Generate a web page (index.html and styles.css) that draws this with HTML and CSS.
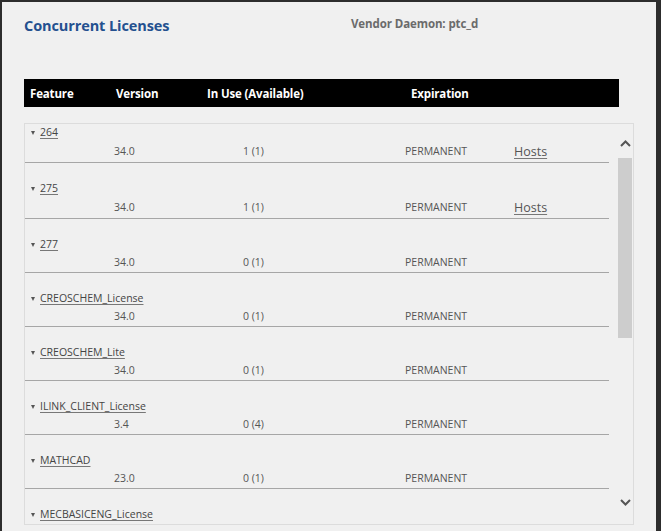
FILE: index.html
```html
<!DOCTYPE html>
<html lang="en">
<head>
<meta charset="utf-8">
<title>Concurrent Licenses</title>
<link rel="stylesheet" href="styles.css">
</head>
<body>
<div class="frame">
  <header class="top">
    <h1 class="title">Concurrent Licenses</h1>
    <div class="vendor">Vendor Daemon: ptc_d</div>
  </header>

  <div class="thead">
    <span class="th th-feature">Feature</span>
    <span class="th th-version">Version</span>
    <span class="th th-inuse">In Use (Available)</span>
    <span class="th th-exp">Expiration</span>
  </div>

  <div class="panel">
    <div class="viewport">
      <ul class="list">
        <li class="row">
          <div class="name"><span class="caret"></span><a href="#">264</a></div>
          <div class="vals has-hosts"><span class="v">34.0</span><span class="u">1 (1)</span><span class="e">PERMANENT</span><a class="hosts" href="#">Hosts</a></div>
        </li>
        <li class="row">
          <div class="name"><span class="caret"></span><a href="#">275</a></div>
          <div class="vals has-hosts"><span class="v">34.0</span><span class="u">1 (1)</span><span class="e">PERMANENT</span><a class="hosts" href="#">Hosts</a></div>
        </li>
        <li class="row">
          <div class="name"><span class="caret"></span><a href="#">277</a></div>
          <div class="vals"><span class="v">34.0</span><span class="u">0 (1)</span><span class="e">PERMANENT</span></div>
        </li>
        <li class="row">
          <div class="name"><span class="caret"></span><a href="#">CREOSCHEM_License</a></div>
          <div class="vals"><span class="v">34.0</span><span class="u">0 (1)</span><span class="e">PERMANENT</span></div>
        </li>
        <li class="row">
          <div class="name"><span class="caret"></span><a href="#">CREOSCHEM_Lite</a></div>
          <div class="vals"><span class="v">34.0</span><span class="u">0 (1)</span><span class="e">PERMANENT</span></div>
        </li>
        <li class="row">
          <div class="name"><span class="caret"></span><a href="#">ILINK_CLIENT_License</a></div>
          <div class="vals"><span class="v">3.4</span><span class="u">0 (4)</span><span class="e">PERMANENT</span></div>
        </li>
        <li class="row">
          <div class="name"><span class="caret"></span><a href="#">MATHCAD</a></div>
          <div class="vals"><span class="v">23.0</span><span class="u">0 (1)</span><span class="e">PERMANENT</span></div>
        </li>
        <li class="row">
          <div class="name"><span class="caret"></span><a href="#">MECBASICENG_License</a></div>
        </li>
      </ul>
    </div>
    <div class="scrollbar">
      <div class="sb-btn sb-up">
        <svg width="11" height="7" viewBox="0 0 11 7"><path d="M1 6 L5.5 1.5 L10 6" fill="none" stroke="#555" stroke-width="2"/></svg>
      </div>
      <div class="sb-thumb"></div>
      <div class="sb-fill"></div>
      <div class="sb-btn sb-down">
        <svg width="11" height="7" viewBox="0 0 11 7"><path d="M1 1 L5.5 5.5 L10 1" fill="none" stroke="#555" stroke-width="2"/></svg>
      </div>
    </div>
  </div>
</div>
</body>
</html>
```

FILE: styles.css
```css
* {
  box-sizing: border-box;
}

html, body {
  margin: 0;
  padding: 0;
  background: #2d2d2d;
}

body {
  font-family: "Open Sans", "Noto Sans", sans-serif;
}

.frame {
  margin: 2px 5px 0 2px;
  min-height: calc(100vh - 2px);
  background: #f0f0f0;
  padding: 0 0 0 22px;
}

/* page heading */
.top {
  display: flex;
  align-items: flex-start;
  height: 77px;
  padding-top: 14px;
}

.title {
  margin: 0;
  width: 327px;
  font-size: 14.5px;
  line-height: 20px;
  font-weight: 700;
  color: #24508f;
  letter-spacing: -0.1px;
}

.vendor {
  font-size: 11.5px;
  line-height: 16px;
  font-weight: 700;
  color: #6b6b6b;
  letter-spacing: -0.1px;
}

/* black column header bar */
.thead {
  display: flex;
  align-items: center;
  width: 595px;
  height: 28px;
  background: #000;
  color: #fff;
  font-size: 11.5px;
  font-weight: 700;
  letter-spacing: -0.15px;
}

.th-feature { width: 92px; padding-left: 6px; }
.th-version { width: 91px; }
.th-inuse { width: 204px; }

/* scrolling list panel */
.panel {
  display: flex;
  margin-top: 16px;
  width: 610px;
  height: 402px;
  border: 1px solid #dcdcdc;
}

.viewport {
  width: 584px;
  overflow: hidden;
}

.list {
  list-style: none;
  margin: -17px 0 0;
  padding: 0;
}

.row {
  padding: 16px 0 1px;
  border-bottom: 1px solid #a6a6a6;
}

.name {
  display: flex;
  align-items: center;
  height: 18px;
  padding-left: 6px;
  font-size: 10.5px;
}

.caret {
  width: 0;
  height: 0;
  border-left: 2.5px solid transparent;
  border-right: 2.5px solid transparent;
  border-top: 4px solid #555;
  margin: 1px 5px 0 0;
}

.name a {
  color: #444;
  text-decoration: underline;
  text-decoration-color: #777;
  text-underline-offset: 2px;
}

.vals {
  display: flex;
  align-items: center;
  height: 18px;
  font-size: 10.5px;
  color: #555;
}

.vals.has-hosts {
  height: 20px;
}

.v { width: 218px; padding-left: 89px; }
.u { width: 162px; }
.e { width: 109px; }

.hosts {
  font-size: 12.5px;
  color: #555;
  text-decoration: underline;
  text-decoration-color: #777;
  text-underline-offset: 2px;
}

/* scrollbar track on the right of the list */
.scrollbar {
  display: flex;
  flex-direction: column;
  width: 24px;
  padding-left: 9px;
}

.sb-btn {
  display: flex;
  justify-content: center;
  width: 14px;
}

.sb-btn svg {
  display: block;
}

.sb-up {
  height: 34px;
  padding-top: 16px;
}

.sb-thumb {
  width: 14px;
  height: 180px;
  background: #cdcdcd;
}

.sb-fill {
  flex: 1;
}

.sb-down {
  height: 25px;
  padding-top: 0;
  align-items: flex-start;
}
```
